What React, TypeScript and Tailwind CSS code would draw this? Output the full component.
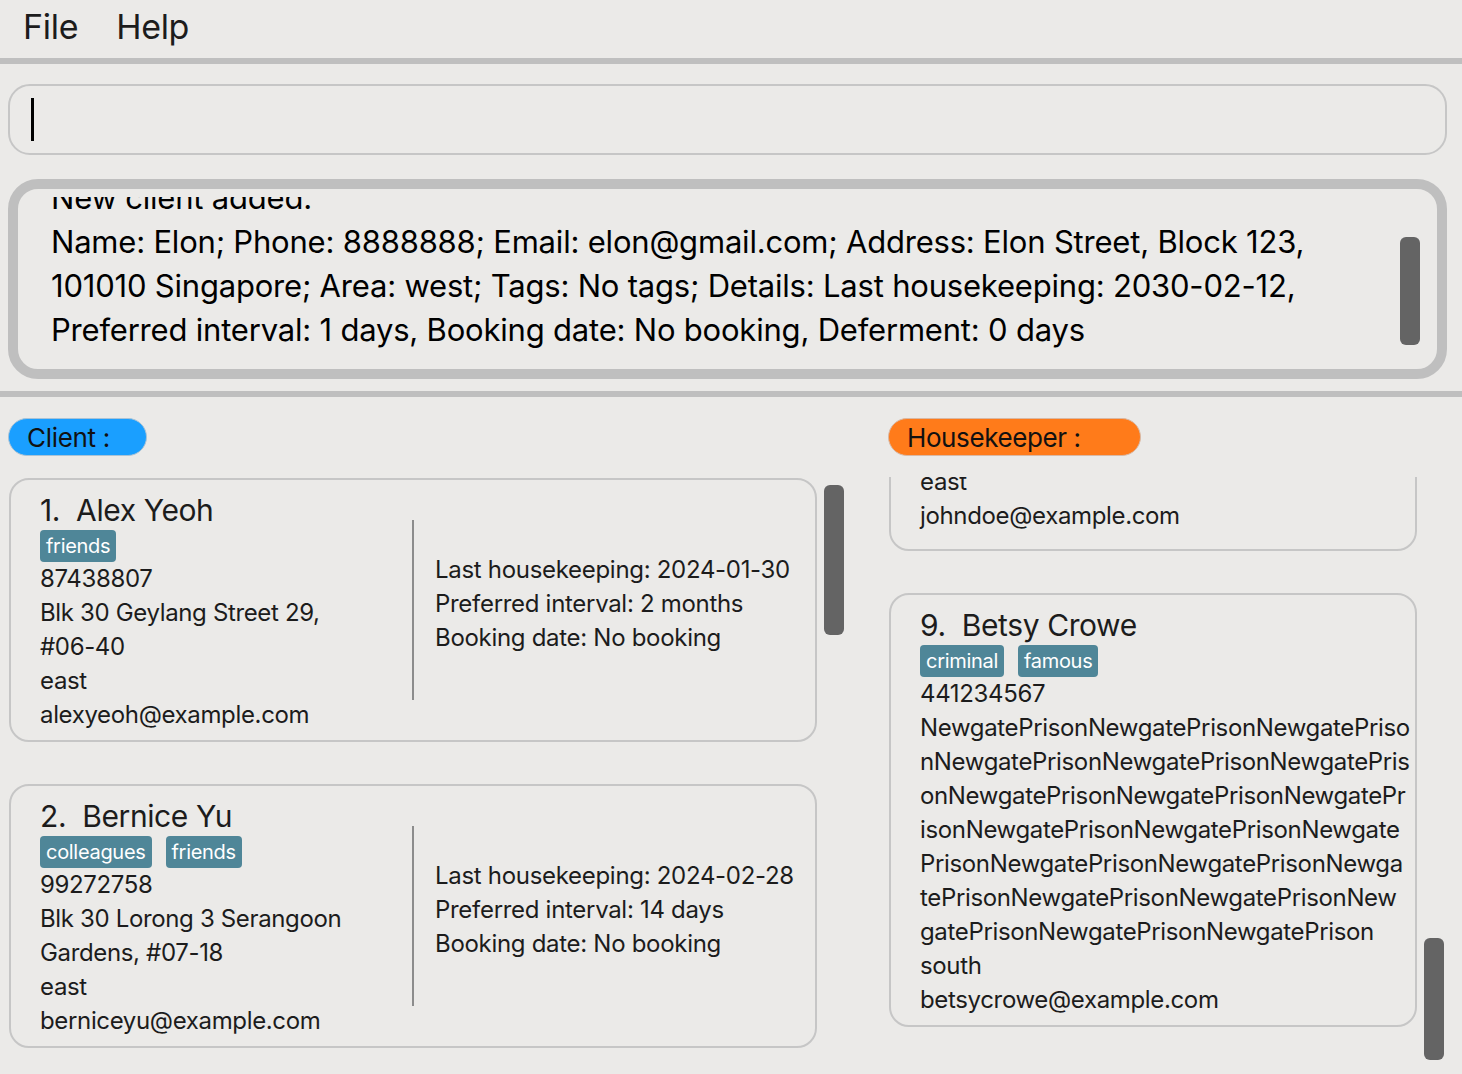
import React from "react";

type CardProps = {
  index: number;
  name: string;
  tags: string[];
  lines: string[];
  details?: string[];
  extraClass?: string;
  padBottom?: string;
};

function Card({ index, name, tags, lines, details, extraClass, padBottom }: CardProps) {
  return (
    <div
      className={
        "flex flex-row border-2 border-[#c6c6c6] rounded-[20px] text-[#1c1c1c] flex-none " +
        (extraClass ?? "")
      }
    >
      <div
        className={
          "flex flex-col pl-[29px] pt-[10px] w-[401px] flex-none " + (padBottom ?? "pb-[8px]")
        }
      >
        <div className="h-[40px] leading-[40px] text-[30px] tracking-[-0.4px] whitespace-pre">
          {index + ".  " + name}
        </div>
        <div className="h-[32px] flex flex-row gap-[14px]">
          {tags.map((t) => (
            <span
              key={t}
              className="h-[32px] leading-[32px] px-[6px] rounded-[4px] bg-[#4f8698] text-white text-[20px] tracking-[-0.3px]"
            >
              {t}
            </span>
          ))}
        </div>
        {lines.map((l, i) => (
          <div
            key={i}
            className="h-[34px] leading-[34px] text-[24px] tracking-[-0.35px] whitespace-nowrap"
          >
            {l}
          </div>
        ))}
      </div>
      {details && (
        <>
          <div className="w-[2px] bg-[#8c8c8c] my-[40px] flex-none" />
          <div className="flex flex-col justify-center pl-[21px] pb-[12px]">
            {details.map((d, i) => (
              <div
                key={i}
                className="h-[34px] leading-[34px] text-[24px] tracking-[-0.3px] whitespace-nowrap"
              >
                {d}
              </div>
            ))}
          </div>
        </>
      )}
    </div>
  );
}

export default function App() {
  return (
    <div className="w-[1462px] h-[1074px] bg-[#ebeae8] overflow-hidden flex flex-col font-['Inter',sans-serif]">
      {/* Menu bar */}
      <div className="h-[58px] flex flex-row items-center pl-[23px] pb-[6px] gap-[38px] text-[34px] tracking-[-0.3px] text-[#1c1c1c] flex-none">
        <span>File</span>
        <span>Help</span>
      </div>
      <div className="h-[6px] bg-[#bfbfbf] flex-none" />

      {/* Command box */}
      <div className="pl-[8px] pr-[15px] pt-[20px] flex-none">
        <div className="h-[71px] border-2 border-[#c6c6c6] rounded-[22px] flex flex-row items-center pl-[21px]">
          <div className="w-[3px] h-[43px] bg-black" />
        </div>
      </div>

      {/* Result display */}
      <div className="pl-[8px] pr-[15px] pt-[24px] flex-none">
        <div className="h-[200px] border-[10px] border-[#bfbfbf] rounded-[30px] flex flex-row overflow-hidden">
          <div className="flex-1 pt-[8px] pb-[8px] flex flex-col">
            <div className="flex-1 overflow-hidden pl-[33px]">
              <div className="-mt-[21px] text-[31px] leading-[44px] tracking-[-0.2px] text-black">
                <div>New client added:</div>
                <div className="whitespace-nowrap">
                  Name: Elon; Phone: 8888888; Email: elon@gmail.com; Address: Elon Street, Block 123,
                </div>
                <div className="whitespace-nowrap">
                  101010 Singapore; Area: west; Tags: No tags; Details: Last housekeeping: 2030-02-12,
                </div>
                <div className="whitespace-nowrap">
                  Preferred interval: 1 days, Booking date: No booking, Deferment: 0 days
                </div>
              </div>
            </div>
          </div>
          <div className="w-[20px] flex-none mr-[17px] pt-[48px]">
            <div className="h-[108px] rounded-[6px] bg-[#646464]" />
          </div>
        </div>
      </div>

      <div className="h-[6px] bg-[#bfbfbf] mt-[12px] flex-none" />

      {/* Lists */}
      <div className="flex-1 flex flex-row px-[8px] pt-[21px] gap-[38px] min-h-0">
        {/* Client column */}
        <div className="w-[842px] flex flex-col flex-none min-h-0">
          <div className="h-[38px] w-[139px] rounded-full bg-[#1a9fff] border border-[#a9c3d6] flex items-center pl-[18px] text-[26px] tracking-[-0.3px] text-[#111] flex-none">
            Client :
          </div>
          <div className="flex-1 flex flex-row gap-[7px] mt-[21px] overflow-hidden min-h-0">
            <div className="w-[808px] ml-[1px] pt-[1px] flex flex-col gap-[42px] flex-none">
              <Card
                index={1}
                name="Alex Yeoh"
                tags={["friends"]}
                lines={[
                  "87438807",
                  "Blk 30 Geylang Street 29,",
                  "#06-40",
                  "east",
                  "alexyeoh@example.com",
                ]}
                details={[
                  "Last housekeeping: 2024-01-30",
                  "Preferred interval: 2 months",
                  "Booking date: No booking",
                ]}
              />
              <Card
                index={2}
                name="Bernice Yu"
                tags={["colleagues", "friends"]}
                lines={[
                  "99272758",
                  "Blk 30 Lorong 3 Serangoon",
                  "Gardens, #07-18",
                  "east",
                  "berniceyu@example.com",
                ]}
                details={[
                  "Last housekeeping: 2024-02-28",
                  "Preferred interval: 14 days",
                  "Booking date: No booking",
                ]}
              />
            </div>
            <div className="w-[20px] flex-none pt-[8px]">
              <div className="h-[150px] rounded-[6px] bg-[#646464]" />
            </div>
          </div>
        </div>

        {/* Housekeeper column */}
        <div className="flex-1 flex flex-col min-h-0">
          <div className="h-[38px] w-[253px] rounded-full bg-[#ff7b1a] border border-[#d9b8a4] flex items-center pl-[18px] text-[26px] tracking-[-0.4px] text-[#111] flex-none">
            Housekeeper :
          </div>
          <div className="flex-1 flex flex-row gap-[7px] mt-[21px] overflow-hidden min-h-0">
            <div className="w-[528px] ml-[1px] flex flex-col gap-[42px] flex-none">
              <Card
                index={8}
                name="John Doe"
                tags={["friends"]}
                lines={["98765432", "311, Clementi Ave 2, #02-25", "east", "johndoe@example.com"]}
                extraClass="-mt-[164px]"
                padBottom="pb-[16px]"
              />
              <Card
                index={9}
                name="Betsy Crowe"
                tags={["criminal", "famous"]}
                lines={[
                  "441234567",
                  "NewgatePrisonNewgatePrisonNewgatePriso",
                  "nNewgatePrisonNewgatePrisonNewgatePris",
                  "onNewgatePrisonNewgatePrisonNewgatePr",
                  "isonNewgatePrisonNewgatePrisonNewgate",
                  "PrisonNewgatePrisonNewgatePrisonNewga",
                  "tePrisonNewgatePrisonNewgatePrisonNew",
                  "gatePrisonNewgatePrisonNewgatePrison",
                  "south",
                  "betsycrowe@example.com",
                ]}
              />
            </div>
            <div className="w-[20px] flex-none pt-[461px]">
              <div className="h-[122px] rounded-[6px] bg-[#646464]" />
            </div>
          </div>
        </div>
      </div>
    </div>
  );
}
